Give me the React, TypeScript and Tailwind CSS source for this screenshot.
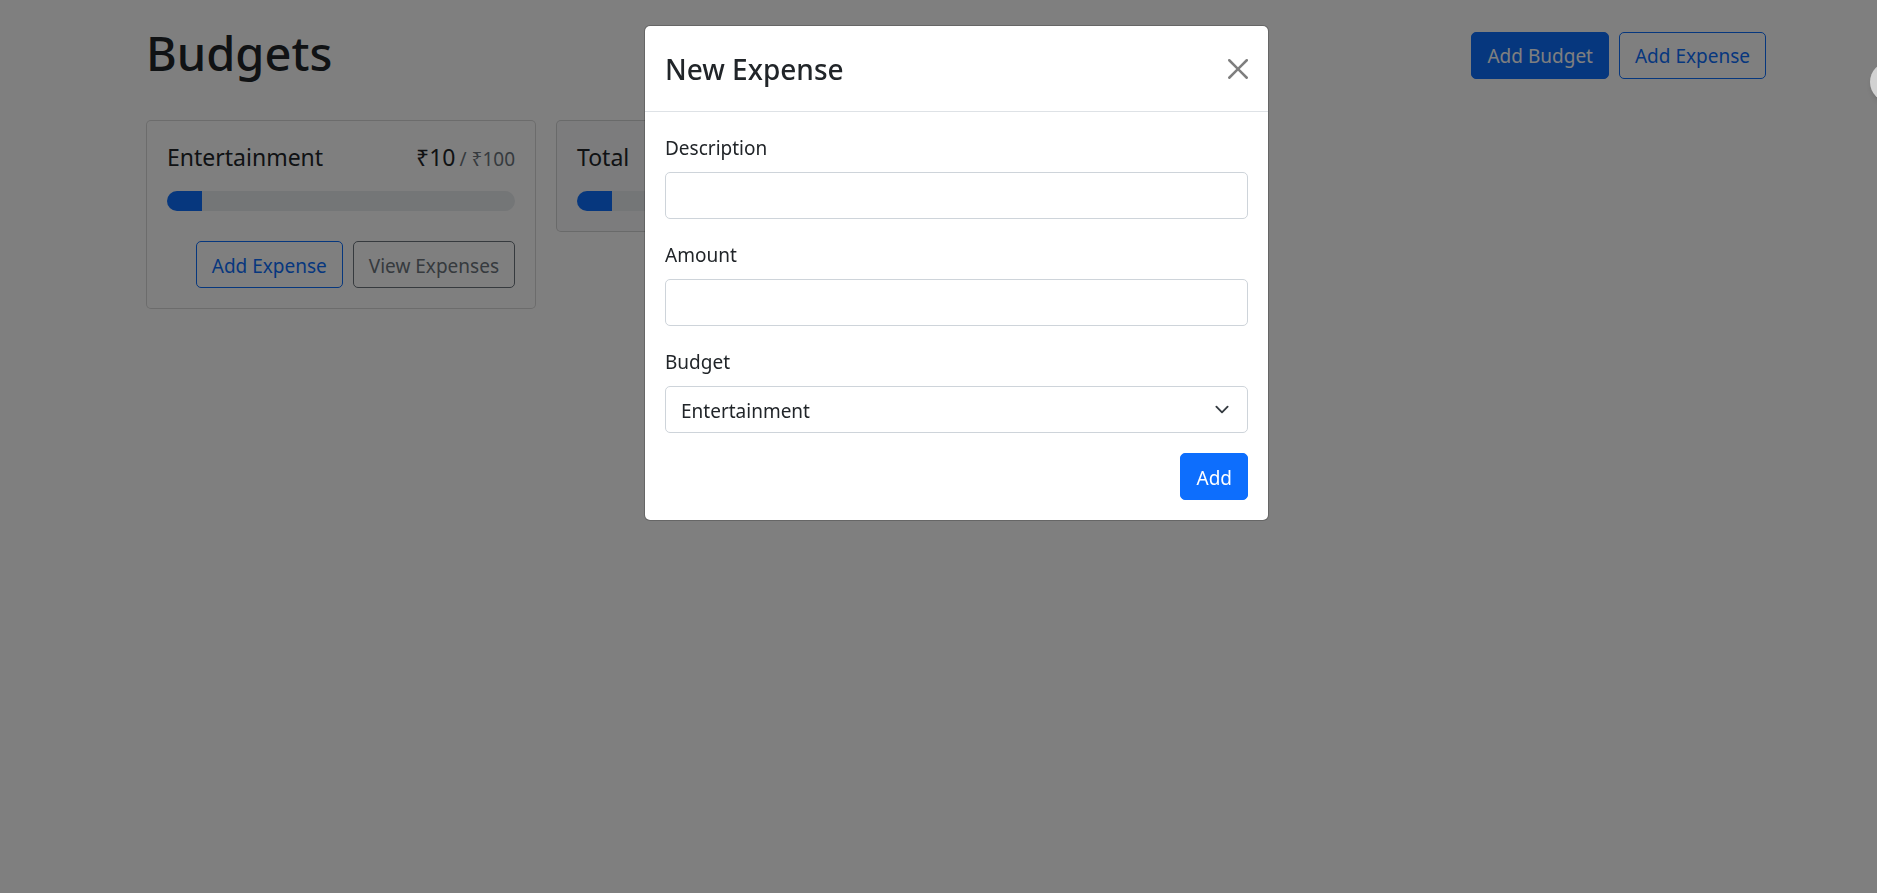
import { useState, type ButtonHTMLAttributes } from "react";

type Budget = { name: string; spent: number; max: number };

const budgets: Budget[] = [{ name: "Entertainment", spent: 10, max: 100 }];

const variants = {
  primary: "border-[#0d6efd] bg-[#0d6efd] text-white",
  outlinePrimary: "border-[#0d6efd] text-[#0d6efd]",
  outlineSecondary: "border-[#6c757d] text-[#6c757d]",
};

function Button({
  variant,
  ...props
}: ButtonHTMLAttributes<HTMLButtonElement> & { variant: keyof typeof variants }) {
  return (
    <button
      type="button"
      className={`h-[47px] rounded-[5px] border px-[15px] pt-[2px] text-[19px] leading-[30px] whitespace-nowrap ${variants[variant]}`}
      {...props}
    />
  );
}

function BudgetCard({ name, spent, max, total = false }: Budget & { total?: boolean }) {
  return (
    <section
      className={`rounded-[5px] border border-black/15 p-5 ${total ? "bg-[#f8f9fa]" : "bg-white"}`}
    >
      <div className="mb-[17px] flex h-[33px] items-baseline justify-between text-[23px] leading-[33px]">
        <h2>{name}</h2>
        <p>
          ₹{spent}
          <span className="ml-1 text-[19px] leading-none text-[#6c757d]">/ ₹{max}</span>
        </p>
      </div>
      <div
        role="progressbar"
        aria-label={`${name} spending`}
        aria-valuenow={spent}
        aria-valuemax={max}
        className="h-5 overflow-hidden rounded-full bg-[#e9ecef]"
      >
        <div className="h-full bg-[#0d6efd]" style={{ width: `${(spent / max) * 100}%` }} />
      </div>
      {!total && (
        <div className="mt-[30px] flex justify-end gap-[10px]">
          <Button variant="outlinePrimary">Add Expense</Button>
          <Button variant="outlineSecondary">View Expenses</Button>
        </div>
      )}
    </section>
  );
}

const fieldStyle =
  "h-[47px] w-full rounded-[5px] border border-[#ced4da] bg-white px-[15px] pt-[2px] text-[19px] text-[#212529]";

function ExpenseDialog() {
  const [budget, setBudget] = useState(budgets[0].name);
  return (
    <div
      role="dialog"
      aria-modal="true"
      aria-labelledby="dialog-title"
      className="w-full max-w-[625px] rounded-md border border-black/20 bg-white bg-clip-padding"
    >
      <header className="flex items-center justify-between border-b border-[#dee2e6] p-5">
        <h2 id="dialog-title" className="pt-[2px] text-[28px] leading-[43px] font-medium">
          New Expense
        </h2>
        <button type="button" aria-label="Close" className="text-black opacity-50">
          <svg viewBox="0 0 16 16" className="size-5" fill="currentColor">
            <path d="M.293.293a1 1 0 011.414 0L8 6.586 14.293.293a1 1 0 111.414 1.414L9.414 8l6.293 6.293a1 1 0 01-1.414 1.414L8 9.414l-6.293 6.293a1 1 0 01-1.414-1.414L6.586 8 .293 1.707a1 1 0 010-1.414z" />
          </svg>
        </button>
      </header>
      <form className="flex flex-col gap-5 p-5" onSubmit={(e) => e.preventDefault()}>
        <div>
          <label htmlFor="description" className="mb-2 block leading-8">
            Description
          </label>
          <input id="description" type="text" className={fieldStyle} />
        </div>
        <div>
          <label htmlFor="amount" className="mb-2 block leading-8">
            Amount
          </label>
          <input id="amount" type="number" className={fieldStyle} />
        </div>
        <div>
          <label htmlFor="budget" className="mb-2 block leading-8">
            Budget
          </label>
          <div className="relative">
            <select
              id="budget"
              value={budget}
              onChange={(e) => setBudget(e.target.value)}
              className={`appearance-none ${fieldStyle}`}
            >
              {budgets.map((b) => (
                <option key={b.name}>{b.name}</option>
              ))}
            </select>
            <svg
              viewBox="0 0 16 16"
              className="pointer-events-none absolute top-4 right-[18px] h-[15px] w-4"
              fill="none"
              stroke="#343a40"
              strokeWidth="2"
              strokeLinecap="round"
              strokeLinejoin="round"
            >
              <path d="M2 5l6 6 6-6" />
            </svg>
          </div>
        </div>
        <div className="flex justify-end">
          <Button variant="primary" type="submit">
            Add
          </Button>
        </div>
      </form>
    </div>
  );
}

export default function App() {
  return (
    <div className="min-h-screen overflow-x-hidden bg-white font-['Noto_Sans',sans-serif] text-[19px] leading-[30px] text-[#212529]">
      <div className="pl-[35px]">
        <main className="mx-auto max-w-[1650px] px-[15px] pt-[25px] pb-[30px]">
          <header className="mb-[35px] flex items-center gap-[10px]">
            <h1 className="mr-auto pb-1 text-[47px] leading-[56px] font-medium">Budgets</h1>
            <Button variant="primary">Add Budget</Button>
            <Button variant="outlinePrimary">Add Expense</Button>
          </header>
          <div className="grid grid-cols-[repeat(auto-fill,minmax(375px,1fr))] items-start gap-5">
            {budgets.map((b) => (
              <BudgetCard key={b.name} {...b} />
            ))}
            <BudgetCard name="Total" spent={10} max={100} total />
          </div>
        </main>
      </div>
      <div className="fixed inset-0 flex items-start justify-center overflow-hidden bg-black/50 pt-[25px] pl-9">
        <ExpenseDialog />
      </div>
      <button
        type="button"
        aria-label="Open side panel"
        className="fixed top-[62px] -right-[33px] size-10 rounded-full bg-[#d2d2d2] shadow-md"
      />
    </div>
  );
}
